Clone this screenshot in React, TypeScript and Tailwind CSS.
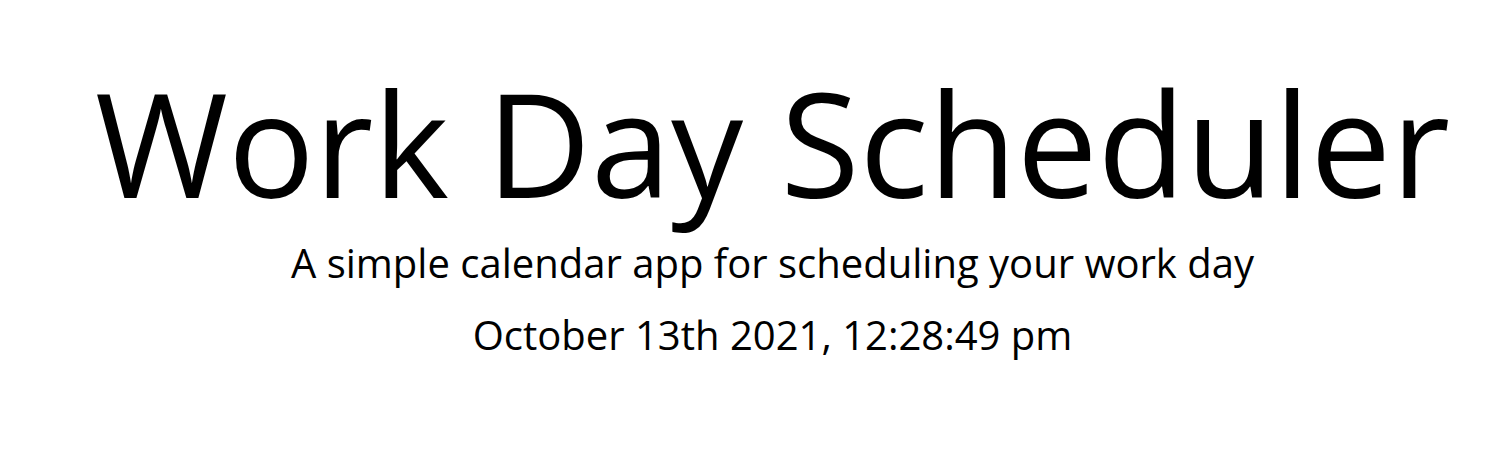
export default function App() {
    return (
        <div className="min-h-[474px] bg-white pl-[41px] font-['Open_Sans',sans-serif] text-black">
            <header className="flex flex-col items-center pt-[56px]">
                <h1 className="text-[144px] leading-[1.2] font-normal">Work Day Scheduler</h1>
                <p className="mt-[4px] text-[40px] leading-[1.5]">A simple calendar app for scheduling your work day</p>
                <p className="mt-[12px] text-[40px] leading-[1.5]">October 13th 2021, 12:28:49 pm</p>
            </header>
        </div>
    )
}
